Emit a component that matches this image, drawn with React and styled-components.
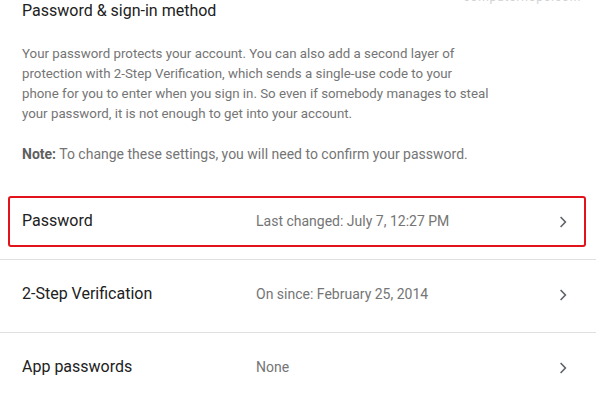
import React from 'react';
import styled, { createGlobalStyle } from 'styled-components';

const GlobalStyle = createGlobalStyle`
  html, body {
    margin: 0;
    padding: 0;
    background: #ffffff;
    overflow: hidden;
  }
  body {
    font-family: Roboto, "Liberation Sans", Arial, sans-serif;
  }
`;

const Page = styled.div`
  position: relative;
  width: 596px;
  height: 402px;
  overflow: hidden;
  background: #ffffff;
`;

const Watermark = styled.span`
  position: absolute;
  top: -10px;
  right: 15px;
  font-size: 12px;
  letter-spacing: 0.8px;
  color: #d2d2d2;
`;

const Intro = styled.section`
  padding: 0 22px;
`;

const Title = styled.h2`
  margin: 0;
  font-size: 16px;
  line-height: 22px;
  font-weight: 400;
  color: #212121;
`;

const Text = styled.p`
  margin: ${(p) => (p.$first ? 22 : 20)}px 0 0;
  font-size: ${(p) => (p.$first ? 13.3 : 14)}px;
  line-height: 20px;
  color: #757575;

  strong {
    font-weight: 700;
    color: #5f5f5f;
  }
`;

const List = styled.div`
  margin-top: 23px;
`;

const Row = styled.div`
  position: relative;
  display: grid;
  grid-template-columns: 234px 1fr 20px;
  align-items: center;
  height: 68px;
  padding: 0 29px 4px 22px;
  border-bottom: 1px solid #e0e0e0;
`;

const Label = styled.div`
  font-size: 16px;
  line-height: 20px;
  color: #212121;
`;

const Value = styled.div`
  font-size: 14px;
  line-height: 20px;
  color: #757575;
`;

const Arrow = styled.svg`
  justify-self: end;
  width: 8px;
  height: 12px;
  margin-top: 2px;
`;

const Highlight = styled.div`
  position: absolute;
  top: 9px;
  bottom: 12px;
  left: 8px;
  right: 10px;
  border: 2px solid #e3131b;
  border-radius: 3px;
  pointer-events: none;
`;

const Chevron = () => (
  <Arrow viewBox="0 0 8 12">
    <polyline points="1.6,1 6.4,6 1.6,11" fill="none" stroke="#5f6368" strokeWidth="1.6" />
  </Arrow>
);

const rows = [
  { label: 'Password', value: 'Last changed: July 7, 12:27 PM', marked: true },
  { label: '2-Step Verification', value: 'On since: February 25, 2014' },
  { label: 'App passwords', value: 'None' },
];

const App = () => (
  <>
    <GlobalStyle />
    <Page>
      <Watermark>computerhope.com</Watermark>
      <Intro>
        <Title>Password &amp; sign-in method</Title>
        <Text $first>
          Your password protects your account. You can also add a second layer of
          <br />
          protection with 2-Step Verification, which sends a single-use code to your
          <br />
          phone for you to enter when you sign in. So even if somebody manages to steal
          <br />
          your password, it is not enough to get into your account.
        </Text>
        <Text>
          <strong>Note:</strong> To change these settings, you will need to confirm your password.
        </Text>
      </Intro>
      <List>
        {rows.map((row) => (
          <Row key={row.label}>
            {row.marked && <Highlight />}
            <Label>{row.label}</Label>
            <Value>{row.value}</Value>
            <Chevron />
          </Row>
        ))}
      </List>
    </Page>
  </>
);

export default App;
